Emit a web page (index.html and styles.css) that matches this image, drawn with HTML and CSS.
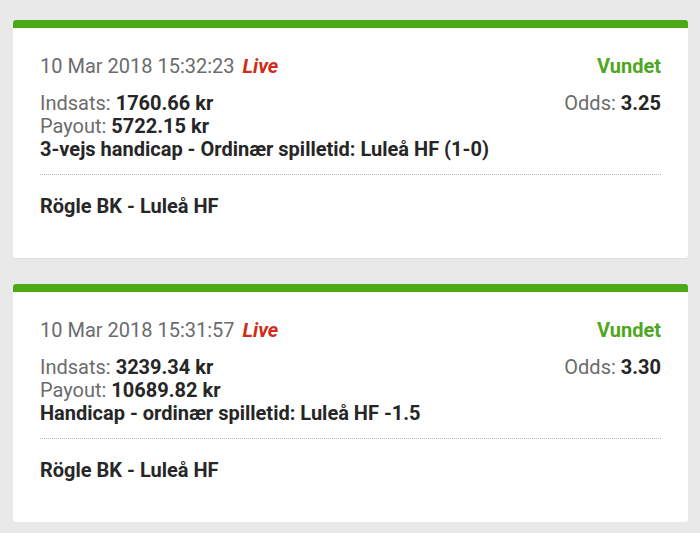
FILE: index.html
```html
<!DOCTYPE html>
<html lang="da">
<head>
    <meta charset="UTF-8">
    <meta name="viewport" content="width=device-width, initial-scale=1.0">
    <title>Kuponer</title>
    <link rel="stylesheet" href="styles.css">
</head>
<body>
    <div class="list">
        <!-- Kupon 1 -->
        <div class="bet">
            <div class="row head">
                <span class="date">10 Mar 2018 15:32:23 <em class="live">Live</em></span>
                <span class="status">Vundet</span>
            </div>
            <div class="row stake">
                <span><span class="label">Indsats:</span> <b>1760.66 kr</b></span>
                <span><span class="label">Odds:</span> <b>3.25</b></span>
            </div>
            <div class="row"><span><span class="label">Payout:</span> <b>5722.15 kr</b></span></div>
            <div class="row"><b>3-vejs handicap - Ordinær spilletid: Luleå HF (1-0)</b></div>
            <div class="sep"></div>
            <div class="match">Rögle BK - Luleå HF</div>
        </div>

        <!-- Kupon 2 -->
        <div class="bet">
            <div class="row head">
                <span class="date">10 Mar 2018 15:31:57 <em class="live">Live</em></span>
                <span class="status">Vundet</span>
            </div>
            <div class="row stake">
                <span><span class="label">Indsats:</span> <b>3239.34 kr</b></span>
                <span><span class="label">Odds:</span> <b>3.30</b></span>
            </div>
            <div class="row"><span><span class="label">Payout:</span> <b>10689.82 kr</b></span></div>
            <div class="row"><b>Handicap - ordinær spilletid: Luleå HF -1.5</b></div>
            <div class="sep"></div>
            <div class="match">Rögle BK - Luleå HF</div>
        </div>
    </div>
</body>
</html>
```

FILE: styles.css
```css
body {
    margin: 0;
    background-color: #e9e9e9;
    font-family: Roboto, "Liberation Sans", sans-serif;
    font-size: 20px;
    line-height: 23px;
    color: #272727;
}
.list {
    display: flex;
    flex-direction: column;
    gap: 26px;
    padding: 20px 12px 0 13px;
}
.bet {
    background: white;
    border-top: 8px solid #4ba816;
    border-radius: 3px;
    padding: 27px 27px 40px 27px;
    box-shadow: 0 1px 1px rgba(0,0,0,0.04);
}
.row {
    display: flex;
    justify-content: space-between;
}
.head {
    margin-bottom: 14px;
}
.date {
    color: #6c6c6c;
}
.live {
    color: #d12c17;
    font-weight: bold;
    font-style: italic;
    margin-left: 3px;
}
.status {
    color: #50a61e;
    font-weight: bold;
}
.label {
    color: #6c6c6c;
}
b {
    font-weight: bold;
    color: #262626;
}
.sep {
    border-top: 1px dotted #b8b8b8;
    margin: 13px 0 20px 0;
}
.match {
    font-weight: bold;
}
```
